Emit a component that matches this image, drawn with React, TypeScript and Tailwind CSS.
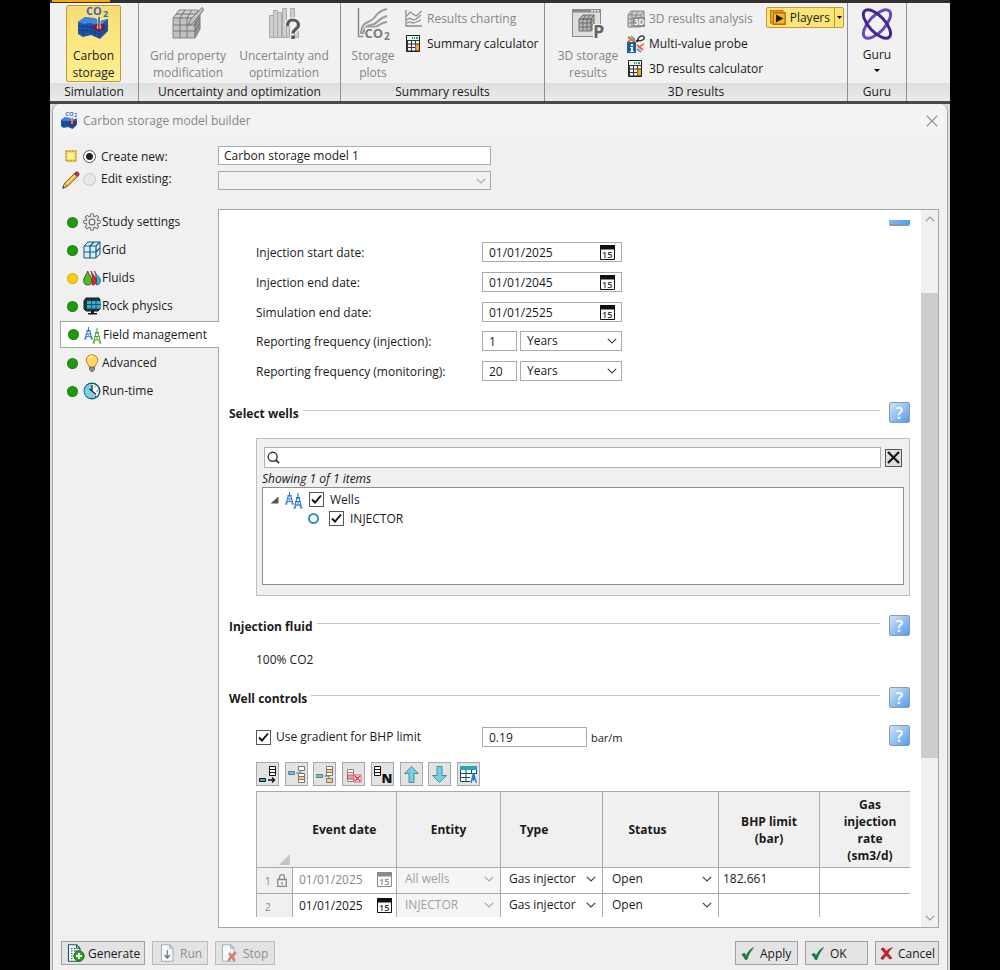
import React, { useId, useState } from "react";

/* ---------- drawings ---------- */

function ReservoirIcon({ className }: { className: string }) {
  return (
    <svg viewBox="0 0 32 32" className={"overflow-visible " + className} aria-hidden="true">
      <path d="M0 15l7-5 10 2 5 2 8-2v12l-8 8-9-4-8 2-5-3z" fill="#1f55ab" />
      <path d="M0 15l7-5 10 1 5 3 8-2-6 5-5 2-6-3-7 1z" fill="#3f86dd" />
      <path d="M5 18v9M9 17v9M13 18v9M17 20v9M21 21v10M26 18v9M0 19l13 1 9 5 8-7M0 23l13 1 9 4 8-6" stroke="#153a78" strokeWidth=".8" fill="none" />
      <ellipse cx="21" cy="20" rx="6" ry="3.400" fill="#7d1530" />
      <ellipse cx="21" cy="20" rx="3.500" ry="2" fill="#e01b24" />
      <path d="M19.500 10h3v12h-3z" fill="#fff" />
      <path d="M21 10v12" stroke="#222" strokeWidth="1.300" />
      <text x="8" y="8" fontFamily="Open Sans, sans-serif" fontSize="11" fontWeight="700" fill="#3b5fc4">CO</text>
      <text x="25" y="10" fontFamily="Open Sans, sans-serif" fontSize="9" fontWeight="700" fill="#3b5fc4">2</text>
    </svg>
  );
}

function GridModIcon() {
  return (
    <svg viewBox="0 0 32 32" className="size-8" aria-hidden="true">
      <path d="M1 11l6-8h19l-3 8z" fill="#cfcfcf" stroke="#858585" />
      <path d="M1 11h22v20H1z" fill="#c2c2c2" stroke="#858585" />
      <path d="M23 11l5-8v19l-5 9z" fill="#949494" stroke="#7c7c7c" />
      <path d="M8 11v20M15 11v20M1 18h22l5-8M1 24h22l5-8M8 11l5-8M15 11l5-8M4 7h21" stroke="#767676" fill="none" />
      <path d="M15 18c3-1 2-4 5-7L30 .5l2 2-9 11c-2 3-5 5-8 4.500z" fill="#c4c4c4" stroke="#747474" />
    </svg>
  );
}

function UncertaintyIcon() {
  return (
    <svg viewBox="0 0 32 32" className="size-8" aria-hidden="true">
      <g fill="#cfcfcf" stroke="#ababab">
        <path d="M1.500 8.500h4v22h-4zM5.500 3.500h4v27h-4zM9.500 5.500h4v25h-4zM14.500 1.500h4v29h-4zM18.500 12.500h3v18h-3zM22.500 1.500h4v9h-4zM26.500 24.500h4v6h-4z" />
      </g>
      <path d="M19.500 19c0-4 2-6 5.200-6s5.800 2 5.800 5c0 4-5.500 4-5.500 8.500" fill="none" stroke="#f1f1f1" strokeWidth="6" />
      <path d="M19.500 19c0-4 2-6 5.200-6s5.800 2 5.800 5c0 4-5.500 4-5.500 8.500" fill="none" stroke="#5a5a5a" strokeWidth="3.200" />
      <path d="M23.200 28.500h3.600v3.500h-3.600z" fill="#5a5a5a" />
    </svg>
  );
}

function StoragePlotIcon() {
  return (
    <svg viewBox="0 0 34 32" className="h-8 w-[34px] overflow-visible" aria-hidden="true">
      <path d="M2.500 1v28.500h5" stroke="#8a8a8a" strokeWidth="1.500" fill="none" />
      <path d="M5 27c1-15 8-9 14-17 3-5 7-7 12-8M7 27c3-13 9-6 14-12 4-4 6-5 10-6M10 22c5-4 9 0 13-4 3-2 5-3 8-3" stroke="#9a9a9a" strokeWidth="2" fill="none" />
      <path d="M9 20.500h23v12H9z" fill="#f1f1f1" />
      <text x="8.500" y="31" fontFamily="Open Sans, sans-serif" fontSize="13" fontWeight="700" fill="#7c7c7c">CO</text>
      <text x="28" y="33" fontFamily="Open Sans, sans-serif" fontSize="10" fontWeight="700" fill="#7c7c7c">2</text>
    </svg>
  );
}

function Storage3dIcon() {
  return (
    <svg viewBox="0 0 34 32" className="h-8 w-[34px] overflow-visible" aria-hidden="true">
      <path d="M1.500 2.500h28v27h-28z" fill="#dedede" stroke="#888" />
      <path d="M1 2h29v3.500H1z" fill="#8a8a8a" />
      <path d="M20 3h2v1.500h-2zM23 3h2v1.500h-2zM26 3h2v1.500h-2z" fill="#eee" />
      <path d="M8 12l4-4h11l-3 4zM8 12h12v12H8zM20 12l3-4v12l-3 4z" fill="#b5b5b5" stroke="#707070" />
      <path d="M12 12v12M16 12v12M8 16h12l3-4M8 20h12l3-4M12 12l3-4M16 12l3-4" stroke="#707070" fill="none" />
      <path d="M22 17h12v15H22z" fill="#f1f1f1" />
      <text x="22" y="31" fontFamily="Open Sans, sans-serif" fontSize="18" fontWeight="700" fill="#666">P</text>
    </svg>
  );
}

function ChartingIcon() {
  return (
    <svg viewBox="0 0 17 17" className="size-[17px]" aria-hidden="true">
      <path d="M1 0v16h16" stroke="#8a8a8a" strokeWidth="1.300" fill="none" />
      <path d="M2 6l3-4 3 2 3 2 6-5M2 10l3-2 3 2 3-1 5-4M2 13l3-1 3 1 3-1 5-2" stroke="#8a8a8a" strokeWidth="1.200" fill="none" />
    </svg>
  );
}

function CalculatorIcon() {
  return (
    <svg viewBox="0 0 17 17" className="size-[17px]" aria-hidden="true">
      <path d="M1.500.5h13v16h-13z" fill="#333" stroke="#222" />
      <path d="M2 1h12v4H2z" fill="#e6f5ec" />
      <path d="M7 2h1v2H7zM9 2h1v2H9zM11 2h2v2h-2z" fill="#2f9d6a" />
      <path d="M3 6h3v2.500H3zM7 6h3v2.500H7zM11 6h3v2.500h-3zM3 9.500h3V12H3zM7 9.500h3V12H7zM3 13h3v2.500H3zM7 13h3v2.500H7z" fill="#f4f4f4" />
      <path d="M10.500 9.500h3.500v6h-3.500z" fill="#f0a81c" />
    </svg>
  );
}

function AnalysisIcon() {
  return (
    <svg viewBox="0 0 18 18" className="size-[18px] overflow-visible" aria-hidden="true">
      <path d="M1 5l3-4h13v12l-3 4H1z" fill="#ccc" stroke="#888" />
      <path d="M1 5h13l3-4M5 5v12M9 5v12M1 9h13M1 13h13M6 1L4 5M11 1L9 5M14 5v12" stroke="#888" fill="none" />
      <path d="M6 7h12v10H6z" fill="#8e8e8e" />
      <text x="7" y="15" fontFamily="Open Sans, sans-serif" fontSize="8" fontWeight="700" fill="#fff">3D</text>
    </svg>
  );
}

function ProbeIcon() {
  return (
    <svg viewBox="0 0 18 18" className="size-[18px]" aria-hidden="true">
      <path d="M1 2l7 5M10 10l6 5M1 7L4 4.500" stroke="#f26a3d" strokeWidth="2.200" />
      <path d="M4 1l4 4M10 14l4 3" stroke="#3aa0d8" strokeWidth="1.600" />
      <path d="M6 9l7-5" stroke="#222" strokeWidth="2" strokeDasharray="3 1" />
      <path d="M11 4c1-3 5-4 6-2s-2 4-5 4z" fill="#fff" stroke="#222" strokeWidth="1.200" />
      <path d="M11 13c2-1 3-3 6-4" stroke="#f26a3d" strokeWidth="1.800" fill="none" />
      <path d="M0 7h9v11H0z" fill="#17639b" />
      <path d="M4 9h2v2H4zM3 12h3v4h1v1H3v-1h1v-3H3z" fill="#fff" />
    </svg>
  );
}

function PlayersIcon() {
  return (
    <svg viewBox="0 0 16 15" className="h-[15px] w-4" aria-hidden="true">
      <path d="M.7.7h12v12H.7z" fill="#fbd04d" stroke="#c07c10" strokeWidth="1.400" />
      <path d="M3.200 2.700h12v11.500h-12z" fill="#f7b52c" stroke="#b8700c" strokeWidth="1.400" />
      <path d="M6 4.500l7.500 4-7.500 4z" fill="#1c1c1c" />
    </svg>
  );
}

function GuruIcon() {
  return (
    <svg viewBox="0 0 32 32" className="size-8" fill="none" aria-hidden="true">
      <ellipse cx="16" cy="16" rx="18" ry="8" transform="rotate(-47 16 16)" stroke="#6a48b8" strokeWidth="3" />
      <ellipse cx="16" cy="16" rx="18" ry="8" transform="rotate(47 16 16)" stroke="#f1f1f1" strokeWidth="5" strokeDasharray="16 100" strokeDashoffset="-34" />
      <ellipse cx="16" cy="16" rx="18" ry="8" transform="rotate(47 16 16)" stroke="#432887" strokeWidth="3" />
    </svg>
  );
}

function CalendarIcon({ muted = false }: { muted?: boolean }) {
  const tone = muted ? "#8a8a8a" : "#111";
  return (
    <svg viewBox="0 0 15 15" className="size-[15px] overflow-visible" aria-hidden="true">
      <path d="M.5.5h14v14H.5z" fill="#fff" stroke={tone} />
      <path d="M0 0h15v4.500H0z" fill={tone} />
      <text x="2" y="13" fontFamily="Open Sans, sans-serif" fontSize="9" fontWeight="600" fill={muted ? "#8a8a8a" : "#333"}>15</text>
    </svg>
  );
}

function Chevron({ className = "text-[#444]" }: { className?: string }) {
  return (
    <svg viewBox="0 0 10 6" className={"h-1.5 w-2.5 " + className} aria-hidden="true">
      <path d="M.8.8L5 5 9.200.8" fill="none" stroke="currentColor" strokeWidth="1.200" />
    </svg>
  );
}

function DerrickShape({ color, x, y, tall = 15 }: { color: string; x: number; y: number; tall?: number }) {
  const h = tall / 15;
  return (
    <g transform={`translate(${x} ${y}) scale(1 ${h})`} stroke={color} fill="none">
      <path d="M4.500 0v6M3.500 4L1 15M5.500 4L8 15" strokeWidth="1.100" />
      <path d="M2.500 4.500h4M2 8.500h5M1.500 12h6" strokeWidth="1" />
      <path d="M3 8.500l4.500 6M6 8.500l-4.500 6" strokeWidth=".6" />
      <path d="M0 15h2.500M6.500 15H9" strokeWidth="1.200" />
    </g>
  );
}

function DerricksIcon({ second = "#1f6fd0" }: { second?: string }) {
  return (
    <svg viewBox="0 0 18 18" className="size-[18px]" aria-hidden="true">
      <DerrickShape color="#2b78d8" x={0} y={1} tall={12} />
      <DerrickShape color={second} x={8.5} y={2} />
    </svg>
  );
}

function GearIcon() {
  const teeth = [0, 45, 90, 135, 180, 225, 270, 315];
  return (
    <svg viewBox="0 0 18 18" className="size-[18px]" aria-hidden="true">
      {teeth.map((a) => (
        <path key={a} d="M7 4L7.700.8h2.600L11 4z" transform={`rotate(${a} 9 9)`} fill="#e8e8e8" stroke="#6a6e73" />
      ))}
      <circle cx="9" cy="9" r="6" fill="#e8e8e8" stroke="#6a6e73" />
      {teeth.map((a) => (
        <path key={a} d="M7.700 5l.5-3.500h1.600l.5 3.500z" transform={`rotate(${a} 9 9)`} fill="#e8e8e8" />
      ))}
      <circle cx="9" cy="9" r="2.900" fill="#f4f4f4" stroke="#6a6e73" strokeWidth="1.200" />
    </svg>
  );
}

function CubeGridIcon() {
  return (
    <svg viewBox="0 0 18 18" className="size-[18px]" aria-hidden="true">
      <path d="M1 5l4-4h12v12l-4 4H1z" fill="#d3f0fa" stroke="#1a5a78" />
      <path d="M1 5h12l4-4M13 5v12M7 5v12M1 11h12l4-4M7 5l4-4" stroke="#1a5a78" strokeWidth="1.200" fill="none" />
    </svg>
  );
}

function FluidsIcon() {
  return (
    <svg viewBox="0 0 18 16" className="h-4 w-[18px]" aria-hidden="true">
      <path d="M11.500 1c1 3.500 6 6 6 9.500 0 3-2 4.500-4 4.500 1-5-.5-9-2-14z" fill="#33b7dd" stroke="#0f5670" strokeWidth=".8" />
      <path d="M8 1c1 3.500 5.500 6 5.500 9.500 0 3-2 4.500-4.500 4.500 1-5 .5-9-1-14z" fill="#e5262b" stroke="#8c1013" strokeWidth=".8" />
      <path d="M4.700 1C6 5 8.800 7 8.800 10.500S7 15 4.700 15 .6 13.500.6 10.500 3.400 5 4.700 1z" fill="#58b530" stroke="#1f5c10" strokeWidth=".9" />
    </svg>
  );
}

function RockIcon() {
  return (
    <svg viewBox="0 0 18 18" className="size-[18px]" aria-hidden="true">
      <path d="M1 4l2-3h13l1 2v9l-2 2H3l-2-2z" fill="#2a3438" stroke="#15191b" />
      <path d="M4 4h13.500v7.500H4z" fill="#2bb1cf" />
      <path d="M8.500 4v7.500M13 4v7.500M4 7.500h13.500" stroke="#0f5668" />
      <path d="M8 14h3v2H8zM5 16h9v1.500H5z" fill="#15191b" />
    </svg>
  );
}

function BulbIcon() {
  return (
    <svg viewBox="0 0 18 18" className="size-[18px]" aria-hidden="true">
      <path d="M9 .8c3.500 0 5.700 2.400 5.700 5.400 0 3-2.400 4-2.900 6.800H6.200C5.700 10.200 3.300 9.200 3.300 6.200 3.300 3.200 5.500.8 9 .8z" fill="#ffd867" stroke="#b98212" />
      <path d="M6 4c1-1.500 2-2 3.500-2" stroke="#fff6d0" strokeWidth="1.400" fill="none" />
      <path d="M6.500 13.300h5v2.200l-1.500 2H8l-1.500-2z" fill="#8a8f94" stroke="#555" strokeWidth=".7" />
    </svg>
  );
}

function ClockIcon() {
  return (
    <svg viewBox="0 0 18 18" className="size-[18px]" aria-hidden="true">
      <circle cx="9" cy="9" r="7.700" fill="#fff" stroke="#125a6b" strokeWidth="1.500" />
      <path d="M8.500 9V2a7 7 0 1 0 4.500 12.300z" fill="#7cd0e3" />
      <path d="M9 3V9l4 3.500M9 9L6.500 7" stroke="#123" strokeWidth="1.300" fill="none" />
      <path d="M12.500 4.500l-1 1M15 9h-1.500M12 14l.8 1" stroke="#125a6b" />
    </svg>
  );
}

function NewIcon() {
  return (
    <svg viewBox="0 0 12 12" className="size-3" aria-hidden="true">
      <path d="M1 1h10v10H1z" fill="#f9dd6a" stroke="#c79a1c" strokeWidth="1.300" strokeDasharray="2.500 .5" />
      <path d="M3 3h6v6H3z" fill="#fff0a8" />
    </svg>
  );
}

function PencilIcon() {
  return (
    <svg viewBox="0 0 18 18" className="size-[18px]" aria-hidden="true">
      <path d="M.8 17.200l1.800-5L12.500 2.500l3 3L5.500 15.300z" fill="#f2b134" stroke="#86590f" strokeWidth=".9" />
      <path d="M4 13.500l10-10" stroke="#fbe08f" strokeWidth="1.200" />
      <path d="M.8 17.200l1.800-5 2.900 3.100z" fill="#e9c9a0" stroke="#6b4a1c" strokeWidth=".6" />
      <path d="M.8 17.200l.8-2.200 1.300 1.400z" fill="#222" />
      <path d="M12.300 2.700l1.400-1.500c1.600-1.200 4.300 1.300 3 3l-1.400 1.500z" fill="#c8303c" stroke="#6e1820" strokeWidth=".8" />
    </svg>
  );
}

function DocIcon({ kind }: { kind: "add" | "run" | "stop" }) {
  const edge = kind === "add" ? "#1d5561" : "#9fb4ba";
  return (
    <svg viewBox="0 0 18 18" className="size-[18px] shrink-0" aria-hidden="true">
      <path d="M1.500.8h8l3.500 3.500v12.900H1.500z" fill="#f5fafb" stroke={edge} strokeWidth="1.100" />
      <path d="M9.500.8v3.500H13" fill="none" stroke={edge} />
      {kind === "add" && (
        <>
          <path d="M4 4.500h1.500M7 4.500h1.500M4 7h1.500M7 7h4M4 9.500h1.500M7 9.500h1M4 12h1.500M4 14.500h1.500" stroke="#1d5561" />
          <circle cx="12" cy="12" r="5.200" fill="#2f9e1f" stroke="#1d7312" />
          <path d="M12 9v6M9 12h6" stroke="#fff" strokeWidth="2" />
        </>
      )}
      {kind === "run" && <path d="M7.200 6v8M4.500 11l2.700 3 2.700-3" stroke="#6f6f6f" strokeWidth="1.200" fill="none" />}
      {kind === "stop" && <path d="M8 9l6 8M15 8.500c-3 2-6 5-7.500 8.500" stroke="#e0776e" strokeWidth="2.300" fill="none" />}
    </svg>
  );
}

function TickMark() {
  return (
    <svg viewBox="0 0 13 13" className="size-[13px] shrink-0" aria-hidden="true">
      <path d="M.8 7.500l2.700-1.200L5 9C6.500 5.500 9 2.500 12.500.6 9.500 4 7.500 8 6 12.400H4.200C3.300 10.400 2.200 8.800.8 7.500z" fill="#12853f" stroke="#0c5c2b" strokeWidth=".6" />
    </svg>
  );
}

function CrossMark() {
  return (
    <svg viewBox="0 0 13 13" className="size-[13px] shrink-0" aria-hidden="true">
      <path d="M1 2L3.500.8 6.500 4.500C8 2.500 10 1.200 12.300.8 10.500 2.500 9 4.300 8 6.300l4 4.900-2.300.9L6.500 8.400C5.200 9.700 4 11 3 12.500L.8 11.500C2 9.500 3.500 7.800 5 6.500z" fill="#d3211f" stroke="#8e1211" strokeWidth=".6" />
    </svg>
  );
}

/* Stack of table cells shared by the event toolbar drawings. */
function Cells({ x, y, color = "#111", accent }: { x: number; y: number; color?: string; accent?: boolean }) {
  return (
    <g>
      <path d={`M${x + 0.5} ${y + 0.5}h6v9h-6zM${x + 0.5} ${y + 3.5}h6M${x + 0.5} ${y + 6.5}h6`} fill="#fff" stroke={color} />
      {accent && <path d={`M${x + 1} ${y + 4}h5v2h-5z`} fill="#f5cf68" />}
    </g>
  );
}

function ToolDrawing({ name }: { name: string }) {
  return (
    <svg viewBox="0 0 19 19" className="size-[19px] overflow-visible" aria-hidden="true">
      {name === "Append row" && (
        <>
          <Cells x={11} y={1} />
          <path d="M1.500 13.500h6v3h-6z" fill="#35bcd8" stroke="#111" />
          <path d="M10 15h6M14 12.500l2.500 2.500-2.500 2.500" stroke="#111" strokeWidth="1.300" fill="none" />
        </>
      )}
      {name === "Insert row above" && (
        <>
          <path d="M1.500 6.500h6v3h-6z" fill="#5cc8e0" stroke="#777" />
          <path d="M11.500 1.500h6v4h-6z" fill="#fff" stroke="#777" />
          <path d="M9 8h5M12.500 6l2 2-2 2" stroke="#777" fill="none" />
          <Cells x={11} y={8} color="#777" accent />
        </>
      )}
      {name === "Insert row below" && (
        <>
          <path d="M1.500 9.500h6v3h-6z" fill="#5cc8e0" stroke="#777" />
          <Cells x={11} y={1} color="#777" accent />
          <path d="M9 11h5v2" stroke="#777" fill="none" />
          <path d="M11.500 13.500h6v4h-6z" fill="#f5cf68" stroke="#777" />
        </>
      )}
      {name === "Delete row" && (
        <>
          <path d="M3.500 4.500h6v12h-6zM3.500 7.500h6M3.500 13.500h6" fill="#fff" stroke="#888" />
          <path d="M3.500 10h7v4h-7z" fill="#ee9aa2" stroke="#b55" />
          <path d="M10 10h7v7h-7z" fill="#fff" stroke="#d65c66" />
          <path d="M11 11l5 5M16 11l-5 5" stroke="#d33c4a" strokeWidth="1.400" />
        </>
      )}
      {name === "Append several rows" && (
        <>
          <Cells x={1} y={1} />
          <text x="8.500" y="18" fontFamily="Open Sans, sans-serif" fontSize="13" fontWeight="800" fill="#111">N</text>
        </>
      )}
      {name === "Move up" && <path d="M9.500 1.500l7 7H12v9H7v-9H2.500z" fill="#6fd0ea" stroke="#5d8794" />}
      {name === "Move down" && <path d="M9.500 17.500l7-7H12v-9H7v9H2.500z" fill="#6fd0ea" stroke="#5d8794" />}
      {name === "Fill from wells" && (
        <>
          <path d="M1.500 1.500h16v15h-16z" fill="#fff" stroke="#1d4d5a" />
          <path d="M1 1h17v4H1z" fill="#25a7b5" />
          <path d="M7 5v12M12.500 5v4M1 8.500h17M1 12.500h10" stroke="#1d4d5a" fill="none" />
          <path d="M11 9h8v10h-8z" fill="#e8eef5" />
          <path d="M14.500 8L12 18M14.500 8L17.500 18M14.500 8v8M12.500 14h4" stroke="#2b78d8" strokeWidth="1.300" />
        </>
      )}
    </svg>
  );
}

/* ---------- controls ---------- */

function HelpButton({ topic }: { topic: string }) {
  return (
    <button
      type="button"
      aria-label={"Help: " + topic}
      className="h-[21px] w-[21px] shrink-0 self-start rounded-[2px] border border-[#8d9bab] bg-linear-to-br from-[#cfe3f8] via-[#94c1f2] to-[#4c9bf0] text-[16px] leading-[18px] font-semibold text-white"
    >
      ?
    </button>
  );
}

function CheckBox({ id, label }: { id: string; label?: string }) {
  const [on, setOn] = useState(true);
  return (
    <span className="grid size-[15px] shrink-0 place-items-center">
      <input
        id={id}
        type="checkbox"
        aria-label={label}
        checked={on}
        onChange={() => setOn(!on)}
        className="col-start-1 row-start-1 size-[15px] appearance-none border border-[#555] bg-white"
      />
      {on && (
        <svg viewBox="0 0 11 11" className="pointer-events-none col-start-1 row-start-1 size-[11px]" aria-hidden="true">
          <path d="M1 5.500l3 3 6-7" fill="none" stroke="#111" strokeWidth="1.900" />
        </svg>
      )}
    </span>
  );
}

function PickList({ id, label, value, disabled, className, boxClass }: {
  id?: string; label?: string; value: string; disabled?: boolean; className: string; boxClass: string;
}) {
  return (
    <span className={"grid items-center " + boxClass}>
      <select
        id={id}
        aria-label={label}
        disabled={disabled}
        defaultValue={value}
        className={"col-start-1 row-start-1 w-full appearance-none bg-transparent opacity-100 outline-none " + className}
      >
        <option>{value}</option>
      </select>
      <span className="pointer-events-none col-start-1 row-start-1 mr-1 justify-self-end">
        <Chevron className={disabled ? "text-[#a8a8a8]" : "text-[#444]"} />
      </span>
    </span>
  );
}

function DateRow({ label, value }: { label: string; value: string }) {
  const id = useId();
  return (
    <div className="flex h-5 items-center">
      <label htmlFor={id} className="w-[226px] shrink-0 pt-0.5">{label}</label>
      <span className="flex h-5 w-[140px] items-center border border-[#a9a9b0] bg-white pr-1.5 pl-1.5">
        <input id={id} defaultValue={value} className="w-full min-w-0 pt-0.5 outline-none" />
        <button type="button" aria-label={"Pick " + label}><CalendarIcon /></button>
      </span>
    </div>
  );
}

function FrequencyRow({ label, value }: { label: string; value: string }) {
  const id = useId();
  return (
    <div className="flex h-5 items-center">
      <label htmlFor={id} className="w-[226px] shrink-0 pt-0.5 whitespace-nowrap">{label}</label>
      <input id={id} defaultValue={value} className="mr-[3px] h-5 w-[35px] border border-[#a9a9b0] bg-white pl-1.5 outline-none" />
      <PickList label={label + " unit"} value="Years" className="pl-1.5" boxClass="h-5 w-[102px] border border-[#a9a9b0] bg-white" />
    </div>
  );
}

function SectionHeading({ title, className }: { title: string; className: string }) {
  return (
    <div className={"flex h-[21px] items-center " + className}>
      <h2 className="pt-0.5 font-bold">{title}</h2>
      <span className="mr-[9px] mb-[5px] ml-1 h-px flex-1 bg-[#c6c6c6]" />
      <HelpButton topic={title} />
    </div>
  );
}

/* ---------- ribbon ---------- */

function RibbonGroup({ title, className, children }: { title: string; className: string; children: React.ReactNode }) {
  return (
    <section className={"flex shrink-0 flex-col border-r border-[#8f8f8f] " + className}>
      <div className="flex h-20 items-start pt-0.5">{children}</div>
      <h2 className="h-[18px] bg-linear-to-b from-[#dedede] to-[#ebebeb] text-center leading-[17px] whitespace-nowrap">{title}</h2>
    </section>
  );
}

function BigButton({ icon, lines, muted, className }: { icon: React.ReactNode; lines: string[]; muted?: boolean; className: string }) {
  return (
    <button type="button" className={"flex h-[77px] shrink-0 flex-col items-center gap-2 border pt-px leading-[17px] whitespace-nowrap " + (muted ? "text-[#858585] " : "") + className}>
      {icon}
      <span>
        {lines[0]}
        <br />
        {lines[1]}
      </span>
    </button>
  );
}

function SmallButton({ icon, text, muted }: { icon: React.ReactNode; text: string; muted?: boolean }) {
  return (
    <button type="button" className={"flex h-[25px] items-center gap-1 whitespace-nowrap " + (muted ? "text-[#858585]" : "")}>
      <span className="w-[18px]">{icon}</span>
      {text}
    </button>
  );
}

function Ribbon() {
  return (
    <header className="border-b-[3px] border-b-[#4a4a4a] bg-[#f1f1f1]">
      <div className="h-[3px] bg-[#35302f] pl-0.5">
        <div className="h-0.5 w-[58px] bg-[#fba80a]" />
      </div>
      <div className="flex overflow-hidden">
        <RibbonGroup title="Simulation" className="w-[89px]">
          <BigButton
            icon={<ReservoirIcon className="size-8" />}
            lines={["Carbon", "storage"]}
            className="ml-4 w-[55px] rounded-[2px] border-[#c49a35] bg-linear-to-b from-[#f9dc72] via-[#fce783] to-[#fdf08f]"
          />
        </RibbonGroup>
        <RibbonGroup title="Uncertainty and optimization" className="w-[202px]">
          <BigButton icon={<GridModIcon />} lines={["Grid property", "modification"]} muted className="ml-1 w-[90px] border-transparent" />
          <BigButton icon={<UncertaintyIcon />} lines={["Uncertainty and", "optimization"]} muted className="w-[102px] border-transparent" />
        </RibbonGroup>
        <RibbonGroup title="Summary results" className="w-[204px]">
          <BigButton icon={<StoragePlotIcon />} lines={["Storage", "plots"]} muted className="ml-1 w-14 border-transparent" />
          <div className="ml-1 flex flex-col pt-px">
            <SmallButton icon={<ChartingIcon />} text="Results charting" muted />
            <SmallButton icon={<CalculatorIcon />} text="Summary calculator" />
          </div>
        </RibbonGroup>
        <RibbonGroup title="3D results" className="w-[303px]">
          <BigButton icon={<Storage3dIcon />} lines={["3D storage", "results"]} muted className="ml-2 w-[70px] border-transparent" />
          <div className="ml-1 flex flex-col pt-px">
            <SmallButton icon={<AnalysisIcon />} text="3D results analysis" muted />
            <SmallButton icon={<ProbeIcon />} text="Multi-value probe" />
            <SmallButton icon={<CalculatorIcon />} text="3D results calculator" />
          </div>
          <button type="button" className="mt-0.5 mr-[3px] ml-auto flex h-[21px] items-center rounded-[2px] border border-[#c49a35] bg-[#fbe578] pl-[3px]">
            <PlayersIcon />
            <span className="px-1">Players</span>
            <span className="flex h-full w-[9px] items-center justify-center border-l border-[#c49a35]">
              <svg viewBox="0 0 5 3" className="h-[3px] w-[5px]" aria-hidden="true"><path d="M0 0h5L2.500 3z" /></svg>
            </span>
          </button>
        </RibbonGroup>
        <RibbonGroup title="Guru" className="w-[59px]">
          <button type="button" className="mx-auto flex flex-col items-center pt-[3px] leading-[17px]">
            <GuruIcon />
            <span className="mt-1.5">Guru</span>
            <svg viewBox="0 0 6 3" className="mt-1.5 h-[3px] w-1.5" aria-hidden="true"><path d="M0 0h6L3 3z" /></svg>
          </button>
        </RibbonGroup>
        <div className="flex flex-1 flex-col">
          <div className="h-20" />
          <div className="h-[18px] bg-linear-to-b from-[#dedede] to-[#ebebeb]" />
        </div>
      </div>
    </header>
  );
}

/* ---------- dialog ---------- */

const tabs = [
  { name: "Study settings", dot: "bg-[#1f9a0d]", icon: <GearIcon /> },
  { name: "Grid", dot: "bg-[#1f9a0d]", icon: <CubeGridIcon /> },
  { name: "Fluids", dot: "bg-[#fbcf08]", icon: <FluidsIcon /> },
  { name: "Rock physics", dot: "bg-[#1f9a0d]", icon: <RockIcon /> },
  { name: "Field management", dot: "bg-[#1f9a0d]", icon: <DerricksIcon second="#4fa52e" />, current: true },
  { name: "Advanced", dot: "bg-[#1f9a0d]", icon: <BulbIcon /> },
  { name: "Run-time", dot: "bg-[#1f9a0d]", icon: <ClockIcon /> },
];

function SideTabs() {
  return (
    <nav className="-mt-px w-[157px] shrink-0">
      {tabs.map((tab) => (
        <button
          key={tab.name}
          type="button"
          className={
            "flex items-center whitespace-nowrap " +
            (tab.current
              ? "relative z-10 mt-px mb-px -ml-px h-[27px] w-[159px] border border-r-0 border-[#a6a6a6] bg-white pl-[7px]"
              : "h-7 w-full pl-1.5")
          }
        >
          <span className={"mr-[5px] size-[11px] rounded-full border border-black/15 " + tab.dot} />
          <span className="mr-px flex w-[18px] justify-center">{tab.icon}</span>
          {tab.name}
        </button>
      ))}
    </nav>
  );
}

function WellPicker() {
  return (
    <div className="mt-[15px] ml-[27px] border border-[#bdbdbd] bg-[#f0f0f0] px-[5px] pt-2 pb-[10px]">
      <div className="flex items-center gap-1 px-0.5">
        <label className="flex h-[21px] flex-1 items-center border border-[#b0b0b0] bg-white pl-0.5">
          <svg viewBox="0 0 13 13" className="size-[13px]" aria-hidden="true">
            <circle cx="5.800" cy="5.800" r="4.600" fill="none" stroke="#333" strokeWidth="1.400" />
            <path d="M9 9l3.300 3.300" stroke="#333" strokeWidth="1.900" />
          </svg>
          <input type="search" aria-label="Search wells" className="w-full pl-1 outline-none" />
        </label>
        <button type="button" aria-label="Clear search" className="flex h-[18px] w-[17px] items-center justify-center border border-[#555] bg-[#dedede]">
          <svg viewBox="0 0 13 13" className="size-[13px]" aria-hidden="true">
            <path d="M1 1l11 11M12 1L1 12" stroke="#111" strokeWidth="2.200" />
          </svg>
        </button>
      </div>
      <p className="mt-0.5 h-[17px] leading-[18px] italic">Showing 1 of 1 items</p>
      <ul className="h-[98px] border border-[#8b8e94] bg-white pt-0.5 pl-[7px]">
        <li>
          <div className="flex h-[19px] items-center">
            <svg viewBox="0 0 9 8" className="mr-1.5 h-2 w-[9px]" aria-hidden="true"><path d="M8.500.5v7h-8z" fill="#555" /></svg>
            <DerricksIcon />
            <span className="w-1.5" />
            <CheckBox id="all-wells" />
            <label htmlFor="all-wells" className="ml-1.5">Wells</label>
          </div>
          <ul className="pl-[38px]">
            <li className="flex h-[19px] items-center">
              <span className="mr-[10px] size-[11px] rounded-full border-2 border-[#2a93c9]" />
              <CheckBox id="injector" />
              <label htmlFor="injector" className="ml-1.5">INJECTOR</label>
            </li>
          </ul>
        </li>
      </ul>
    </div>
  );
}

const tools = ["Append row", "Insert row above", "Insert row below", "Delete row", "Append several rows", "Move up", "Move down", "Fill from wells"];

const events = [
  { n: 1, locked: true, date: "01/01/2025", entity: "All wells", bhp: "182.661" },
  { n: 2, locked: false, date: "01/01/2025", entity: "INJECTOR", bhp: "" },
];

function EventTable() {
  return (
    <div className="mt-[5px] ml-[27px] h-[126px] overflow-hidden">
      <table className="w-[664px] table-fixed border-collapse">
        <colgroup>
          <col className="w-[36px]" />
          <col className="w-[104px]" />
          <col className="w-[104px]" />
          <col className="w-[102px]" />
          <col className="w-[116px]" />
          <col className="w-[101px]" />
          <col className="w-[101px]" />
        </colgroup>
        <thead>
          <tr className="h-[76px] border border-[#a9a9a9] bg-[#f0f0f0] leading-[17px] [&>th]:border-r [&>th]:border-[#a9a9a9]">
            <th aria-label="Row" className="border-r-0! align-bottom">
              <svg viewBox="0 0 11 11" className="mr-[3px] mb-0.5 ml-auto size-[11px]" aria-hidden="true"><path d="M11 0v11H0z" fill="#c4c4c4" /></svg>
            </th>
            <th>Event date</th>
            <th>Entity</th>
            <th className="pr-[35px]">Type</th>
            <th className="pr-[26px]">Status</th>
            <th>BHP limit<br />(bar)</th>
            <th>Gas<br />injection<br />rate<br />(sm3/d)</th>
          </tr>
        </thead>
        <tbody>
          {events.map((e) => (
            <tr key={e.n} className="h-[26px] border border-[#a9a9a9] [&>td]:border-r [&>td]:border-[#a9a9a9] [&>td]:pb-[3px]">
              <th scope="row" className="border-r border-[#a9a9a9] bg-[#f0f0f0] font-normal text-[#888]">
                <span className="flex items-center gap-1.5 pl-2 text-[10px]">
                  {e.n}
                  {e.locked && (
                    <svg viewBox="0 0 10 13" className="h-[13px] w-2.5" aria-hidden="true">
                      <path d="M.7 5.500h8.600v6.800H.7zM2.500 5.500V3.200a2.500 2.500 0 0 1 5 0v2.300M5 8v2.500" fill="none" stroke="#888" strokeWidth="1.300" />
                    </svg>
                  )}
                </span>
              </th>
              <td>
                <span className="flex items-center pt-px pr-1 pl-1.5">
                  <input
                    aria-label={"Event date " + e.n}
                    defaultValue={e.date}
                    disabled={e.locked}
                    className={"w-full min-w-0 bg-transparent outline-none " + (e.locked ? "text-[#888]" : "")}
                  />
                  <button type="button" aria-label="Pick date" disabled={e.locked}><CalendarIcon muted={e.locked} /></button>
                </span>
              </td>
              <td className="bg-[#f5f5f5]">
                <PickList label={"Entity " + e.n} value={e.entity} disabled className="pl-2 text-[#a0a0a0]" boxClass="h-5 pr-0.5" />
              </td>
              <td>
                <PickList label={"Type " + e.n} value="Gas injector" className="pl-2" boxClass="h-5 pr-0.5" />
              </td>
              <td>
                <PickList label={"Status " + e.n} value="Open" className="pl-[9px]" boxClass="h-5 pr-0.5" />
              </td>
              <td>
                <input aria-label={"BHP limit " + e.n} defaultValue={e.bhp} className="w-full pl-1 outline-none" />
              </td>
              <td>
                <input aria-label={"Gas injection rate " + e.n} className="w-full pl-1 outline-none" />
              </td>
            </tr>
          ))}
        </tbody>
      </table>
    </div>
  );
}

function WellControls() {
  return (
    <>
      <div className="mt-[17px] ml-[27px] flex h-6 items-center">
        <div className="flex w-[226px] shrink-0 items-center gap-[5px] whitespace-nowrap">
          <CheckBox id="gradient" />
          <label htmlFor="gradient">Use gradient for BHP limit</label>
        </div>
        <input id="gradient-value" aria-label="Gradient" defaultValue="0.19" className="h-5 w-[105px] border border-[#a9a9b0] bg-white pl-1.5 outline-none" />
        <label htmlFor="gradient-value" className="ml-1 flex-1 pt-0.5 text-[11px]">bar/m</label>
        <HelpButton topic="BHP gradient" />
      </div>
      <div className="mt-[13px] ml-[27px] flex w-[224px] justify-between">
        {tools.map((t) => (
          <button key={t} type="button" aria-label={t} className="flex h-6 w-[23px] items-center justify-center border border-[#a9a9a9] bg-[#e3e3e3]">
            <ToolDrawing name={t} />
          </button>
        ))}
      </div>
      <EventTable />
    </>
  );
}

function ScrollTrack() {
  return (
    <div className="flex w-[17px] shrink-0 flex-col items-center bg-[#f0f0f0]" aria-hidden="true">
      <Chevron className="my-1.5 shrink-0 rotate-180 text-[#9a9a9a]" />
      <div className="flex-[65]" />
      <div className="w-full flex-[465] bg-[#cdcdcd]" />
      <div className="flex-[151]" />
      <Chevron className="my-1.5 shrink-0 text-[#9a9a9a]" />
    </div>
  );
}

function FooterButton({ icon, text, muted, className }: { icon: React.ReactNode; text: string; muted?: boolean; className: string }) {
  return (
    <button
      type="button"
      disabled={muted}
      className={"flex h-6 items-center border bg-[#e3e3e3] pl-[5px] whitespace-nowrap " + (muted ? "border-[#bcbcbc] text-[#8f8f8f] " : "border-[#a0a0a0] ") + className}
    >
      {icon}
      <span className="pt-px">{text}</span>
    </button>
  );
}

function ModelBuilder() {
  return (
    <main className="flex min-w-0 flex-1 flex-col rounded-t-lg border-x border-[#a8a8a8] bg-[#f0f0f0]">
      <div className="flex h-[33px] items-center rounded-t-lg bg-[#f3f3f3] pr-[9px] pl-2">
        <ReservoirIcon className="size-[17px]" />
        <h1 className="ml-[5px] flex-1 text-[#858585]">Carbon storage model builder</h1>
        <button type="button" aria-label="Close">
          <svg viewBox="0 0 12 12" className="size-3" aria-hidden="true"><path d="M.7.7l10.600 10.600M11.300.7L.7 11.300" stroke="#8a8a8a" strokeWidth="1.200" /></svg>
        </button>
      </div>

      <div className="flex flex-col gap-[5px] px-2 pt-[9px]">
        <div className="flex h-5 items-center">
          <span className="flex w-[22px] justify-center pr-0.5"><NewIcon /></span>
          <input id="create" type="radio" name="mode" defaultChecked className="size-[13px] appearance-none rounded-full border border-[#555] bg-white checked:bg-[radial-gradient(#222_3px,transparent_4px)]" />
          <label htmlFor="create" className="w-[122px] pt-0.5 pl-[5px]">Create new:</label>
          <input aria-label="Model name" defaultValue="Carbon storage model 1" className="h-[19px] w-[273px] self-start border border-[#a9a9b0] bg-white pl-[5px] outline-none" />
        </div>
        <div className="flex h-5 items-start">
          <span className="flex w-[22px] justify-center pr-0.5"><PencilIcon /></span>
          <input id="edit" type="radio" name="mode" disabled className="mt-0.5 size-[13px] appearance-none rounded-full border border-[#c6c6c6] bg-[#e8e8e8]" />
          <label htmlFor="edit" className="w-[122px] pl-[5px]">Edit existing:</label>
          <PickList label="Existing model" value="" disabled className="" boxClass="h-[19px] w-[273px] border border-[#a9a9b0] bg-[#f2f2f2]" />
        </div>
      </div>

      <div className="mt-[18px] flex flex-1 px-2">
        <SideTabs />
        <div className="flex min-w-0 flex-1 border border-[#a6a6a6] bg-white">
          <div className="min-w-0 flex-1 pt-[10px] pr-[11px] pb-[10px] pl-[10px]">
            <div className="ml-auto h-1.5 w-[21px] rounded-b-[2px] border-b-2 border-[#8199b5] bg-linear-to-r from-[#86b8ee] to-[#4c9bf0]" />
            <div className="mt-4 ml-[27px] flex flex-col gap-[10px]">
              <DateRow label="Injection start date:" value="01/01/2025" />
              <DateRow label="Injection end date:" value="01/01/2045" />
              <DateRow label="Simulation end date:" value="01/01/2525" />
            </div>
            <div className="mt-[9px] ml-[27px] flex flex-col gap-[10px]">
              <FrequencyRow label="Reporting frequency (injection):" value="1" />
              <FrequencyRow label="Reporting frequency (monitoring):" value="20" />
            </div>
            <SectionHeading title="Select wells" className="mt-[21px]" />
            <WellPicker />
            <SectionHeading title="Injection fluid" className="mt-[19px]" />
            <p className="mt-[14px] ml-[27px] h-5 leading-5">100% CO2</p>
            <SectionHeading title="Well controls" className="mt-[17px]" />
            <WellControls />
          </div>
          <ScrollTrack />
        </div>
      </div>

      <footer className="flex justify-between px-2 pt-[13px] pb-[5px]">
        <div className="flex gap-[7px]">
          <FooterButton icon={<DocIcon kind="add" />} text="Generate" className="w-[84px] gap-[3px]" />
          <FooterButton icon={<DocIcon kind="run" />} text="Run" muted className="w-14 gap-0.5 pl-[7px]!" />
          <FooterButton icon={<DocIcon kind="stop" />} text="Stop" muted className="w-[60px] gap-1" />
        </div>
        <div className="flex gap-[7px]">
          <FooterButton icon={<TickMark />} text="Apply" className="w-[63px] gap-1.5" />
          <FooterButton icon={<TickMark />} text="OK" className="w-[63px] gap-1.5" />
          <FooterButton icon={<CrossMark />} text="Cancel" className="w-[64px] gap-[5px] pl-1!" />
        </div>
      </footer>
    </main>
  );
}

export default function App() {
  return (
    <div className="flex min-h-screen flex-col bg-black px-[50px] font-['Open_Sans','Noto_Sans',sans-serif] text-[12px] leading-4 text-[#1a1a1a]">
      <Ribbon />
      <div className="flex flex-1 bg-[#d9d9d9] px-0.5">
        <ModelBuilder />
      </div>
    </div>
  );
}
